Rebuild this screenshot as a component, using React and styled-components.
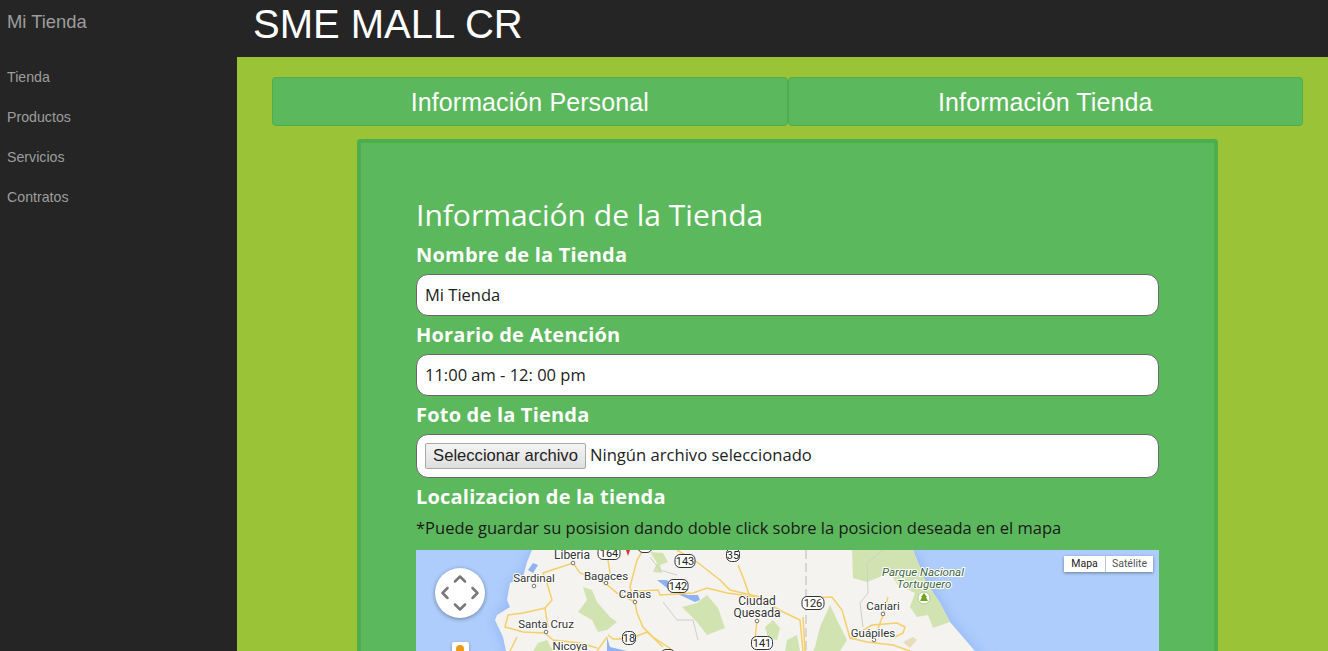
import styled, { createGlobalStyle } from "styled-components";
import { ChevronUp, ChevronDown, ChevronLeft, ChevronRight } from "lucide-react";

const GlobalStyle = createGlobalStyle`
  html, body {
    margin: 0;
    height: 100%;
    overflow: hidden;
    background: #252525;
    font-family: "Liberation Sans", Arial, sans-serif;
  }
  * { box-sizing: border-box; }
`;

const menu = ["Tienda", "Productos", "Servicios", "Contratos"];

const coast =
  "M532 550 L527 562 L523 577 L510 583 L507 600 L510 607 L497 615 L495 620 L503 637 L510 670 L990 670 L975 651 L950 622 L940 603 L925 580 L913 550 Z";

const parks = [
  "M583 587 L592 590 L597 602 L610 617 L617 622 L607 630 L598 632 L592 620 L578 612 L587 600 Z",
  "M650 552 L663 553 L668 562 L660 565 L662 573 L653 572 L657 563 Z",
  "M682 607 L697 603 L707 595 L718 608 L725 628 L707 635 L697 622 Z",
  "M765 627 L773 620 L780 628 L777 640 L768 638 Z",
  "M787 640 L797 635 L800 651 L785 651 Z",
  "M538 643 L547 640 L553 651 L533 651 Z",
  "M852 550 L913 550 L925 580 L940 603 L950 622 L933 628 L928 615 L917 617 L910 607 L915 593 L898 585 L890 573 L867 582 L853 578 Z",
  "M815 647 L820 627 L830 605 L837 620 L847 640 L840 651 L813 651 Z",
];

const roads = [
  "M573 563 L580 573 L605 583 L617 593 L635 602 L637 613 L643 627 L653 637 L668 647 L673 651",
  "M635 602 L630 587 L637 560 L643 550",
  "M677 550 L697 562 L720 580 L730 590 L760 597",
  "M622 592 L658 590 L660 595 L693 593 L707 588 L727 593 L757 597 L783 612 L800 620 L803 651",
  "M738 565 L743 577 L750 597",
  "M573 563 L543 573 L547 583 L552 600 L545 608 L523 613 L508 615 L505 627 L523 632 L545 633 L553 640 L580 643 L597 648",
  "M545 608 L548 627",
  "M510 651 L517 637",
  "M608 560 L610 573 L607 582",
  "M608 635 L613 639 L630 639 L647 632 L663 647",
  "M597 651 L607 637",
  "M757 620 L755 640",
  "M805 598 L832 597 L842 610 L850 638 L867 642 L893 645 L910 651",
  "M803 617 L805 651",
  "M850 638 L872 625 L897 623 L905 627 L903 633 L895 637",
  "M875 637 L883 615 L888 597",
];

const greyRoads = [
  "M883 550 L867 563 L868 593 L860 603 L863 627",
  "M650 557 L660 570 L677 575",
  "M663 602 L677 620 L693 620 L698 640",
];

const lakes = [
  "M657 580 L667 580 L673 590 L687 595 L698 595 L700 600 L695 602 L680 595 L667 588 Z",
  "M607 637 L610 647 L627 651 L607 651 Z",
  "M528 570 L533 563 L538 565 L533 573 Z",
];

const labels = [
  { x: 572, y: 559, text: "Liberia", size: 12 },
  { x: 534, y: 582, text: "Sardinal", size: 11.5 },
  { x: 606, y: 580, text: "Bagaces", size: 11.5 },
  { x: 635, y: 598, text: "Cañas", size: 11.5 },
  { x: 757, y: 605, text: "Ciudad", size: 12 },
  { x: 757, y: 617, text: "Quesada", size: 12 },
  { x: 546, y: 628, text: "Santa Cruz", size: 11.5 },
  { x: 570, y: 650, text: "Nicoya", size: 11.5 },
  { x: 883, y: 610, text: "Cariari", size: 11.5 },
  { x: 873, y: 637, text: "Guápiles", size: 11.5 },
];

const shields = [
  { x: 609, y: 553, w: 22, text: "164" },
  { x: 685, y: 561, w: 20, text: "143" },
  { x: 678, y: 586, w: 20, text: "142" },
  { x: 629, y: 638, w: 13, text: "18" },
  { x: 762, y: 643, w: 21, text: "141" },
  { x: 813, y: 603, w: 22, text: "126" },
  { x: 733, y: 555, w: 13, text: "35" },
  { x: 645, y: 546, w: 14, text: "" },
  { x: 668, y: 656, w: 14, text: "" },
];

const towns = [
  [573, 563], [534, 586], [606, 583], [635, 602], [757, 621], [546, 632], [883, 614], [874, 640],
];

export default function App() {
  return (
    <Page>
      <GlobalStyle />
      <Sidebar>
        <Brand>Mi Tienda</Brand>
        <Menu>
          {menu.map((item) => (
            <MenuItem key={item}>{item}</MenuItem>
          ))}
        </Menu>
      </Sidebar>
      <Column>
        <Header>SME MALL CR</Header>
        <Main>
          <Tabs>
            <Tab>Información Personal</Tab>
            <Tab>Información Tienda</Tab>
          </Tabs>
          <Card>
            <Title>Información de la Tienda</Title>
            <Label>Nombre de la Tienda</Label>
            <TextInput defaultValue="Mi Tienda" />
            <Label>Horario de Atención</Label>
            <TextInput defaultValue="11:00 am - 12: 00 pm" />
            <Label>Foto de la Tienda</Label>
            <FileBox>
              <FileButton type="button">Seleccionar archivo</FileButton>
              <FileName>Ningún archivo seleccionado</FileName>
            </FileBox>
            <Label>Localizacion de la tienda</Label>
            <Hint>*Puede guardar su posision dando doble click sobre la posicion deseada en el mapa</Hint>
            <MapBox>
              <MapDrawing viewBox="416 550 743 120" width="743" height="120">
                <defs>
                  <filter id="shore" x="-10%" y="-10%" width="120%" height="120%">
                    <feGaussianBlur stdDeviation="7" />
                  </filter>
                </defs>
                <rect x="416" y="550" width="743" height="120" fill="#aecdfc" />
                <path d={coast} fill="#8fb3f3" filter="url(#shore)" />
                <path d={coast} fill="#f4f3ef" />
                {parks.map((d) => (
                  <path key={d} d={d} fill="#d2e3b2" />
                ))}
                <path d="M903 642 L913 637 L917 640 L910 648 Z" fill="#e9dcbc" />
                {greyRoads.map((d) => (
                  <path key={d} d={d} fill="none" stroke="#cfcfca" strokeWidth="1" />
                ))}
                <path d="M806 550 L806 651" stroke="#c4c4c0" strokeWidth="1.2" strokeDasharray="9 4" />
                {lakes.map((d) => (
                  <path key={d} d={d} fill="#8fb3f0" />
                ))}
                {roads.map((d) => (
                  <path key={d} d={d} fill="none" stroke="#f6cf6a" strokeWidth="1.5" />
                ))}
                {towns.map(([x, y]) => (
                  <circle key={`${x}-${y}`} cx={x} cy={y} r="1.8" fill="#fff" stroke="#555" strokeWidth="0.8" />
                ))}
                <path d="M626 550 L630 550 L628 556 Z" fill="#d9372c" />
                {labels.map((l) => (
                  <MapLabel key={l.text} x={l.x} y={l.y} $size={l.size}>
                    {l.text}
                  </MapLabel>
                ))}
                <ParkLabel x="923" y="576">Parque Nacional</ParkLabel>
                <ParkLabel x="924" y="588">Tortuguero</ParkLabel>
                <circle cx="924" cy="598" r="6" fill="#fff" stroke="#b7c79c" />
                <path d="M924 593 L927 597 L926 597 L928 601 L920 601 L922 597 L921 597 Z" fill="#6fa51d" />
                {shields.map((s) => (
                  <g key={s.x}>
                    <rect
                      x={s.x - s.w / 2}
                      y={s.y - 6.5}
                      width={s.w}
                      height="13"
                      rx="5"
                      fill="#fff"
                      stroke="#333"
                      strokeWidth="1"
                    />
                    <ShieldText x={s.x} y={s.y + 4}>{s.text}</ShieldText>
                  </g>
                ))}
              </MapDrawing>
              <PanControl>
                <PanUp><ChevronUp size={20} strokeWidth={3} /></PanUp>
                <PanLeft><ChevronLeft size={20} strokeWidth={3} /></PanLeft>
                <PanRight><ChevronRight size={20} strokeWidth={3} /></PanRight>
                <PanDown><ChevronDown size={20} strokeWidth={3} /></PanDown>
              </PanControl>
              <Pegman><PegmanHead /></Pegman>
              <MapType>
                <MapTypeButton $active $width={41}>Mapa</MapTypeButton>
                <MapTypeButton $width={48}>Satélite</MapTypeButton>
              </MapType>
            </MapBox>
          </Card>
        </Main>
      </Column>
    </Page>
  );
}

const Page = styled.div`
  display: flex;
  height: 100vh;
  overflow: hidden;
`;

const Sidebar = styled.aside`
  width: 237px;
  flex-shrink: 0;
  background: #252525;
  padding: 0 7px;
`;

const Brand = styled.div`
  height: 57px;
  padding-top: 11px;
  font-size: 18.4px;
  line-height: 22px;
  color: #9d9d9d;
`;

const Menu = styled.nav`
  display: flex;
  flex-direction: column;
`;

const MenuItem = styled.a`
  height: 40px;
  font-size: 14.2px;
  line-height: 40px;
  color: #9d9d9d;
`;

const Column = styled.div`
  flex: 1;
  min-width: 0;
  display: flex;
  flex-direction: column;
`;

const Header = styled.header`
  height: 57px;
  flex-shrink: 0;
  padding: 1px 0 0 16px;
  background: #252525;
  font-size: 40px;
  line-height: 46px;
  color: #ffffff;
`;

const Main = styled.main`
  flex: 1;
  min-height: 0;
  overflow: hidden;
  padding: 20px 25px 0 35px;
  background: #9ac337;
`;

const Tabs = styled.div`
  display: flex;
`;

const Tab = styled.button`
  flex: 1;
  height: 49px;
  padding: 1px 0 0;
  border: 1px solid #4cae4c;
  border-radius: 4px;
  background: #5cb85c;
  font-family: "Liberation Sans", Arial, sans-serif;
  font-size: 25px;
  letter-spacing: 0.1px;
  color: #ffffff;
`;

const Card = styled.section`
  margin: 13px 85px 0;
  padding: 52px 55px 0;
  border: 4px solid #4cae4c;
  border-bottom: 0;
  border-radius: 4px 4px 0 0;
  background: #5cb85c;
`;

const Title = styled.h2`
  margin: 0 0 1px;
  font-family: "Open Sans", sans-serif;
  font-size: 30px;
  font-weight: 400;
  line-height: 40px;
  color: #ffffff;
`;

const Label = styled.label`
  display: block;
  font-family: "Open Sans", sans-serif;
  font-size: 20px;
  font-weight: 700;
  letter-spacing: 0.2px;
  line-height: 38px;
  color: #ffffff;
`;

const TextInput = styled.input`
  display: block;
  width: 100%;
  height: 42px;
  padding: 0 8px 2px;
  border: 1px solid #666666;
  border-radius: 12px;
  background: #ffffff;
  font-family: "Open Sans", sans-serif;
  font-size: 16.5px;
  color: #222222;
  outline: none;
`;

const FileBox = styled.div`
  display: flex;
  align-items: center;
  gap: 4px;
  height: 44px;
  padding: 0 8px;
  border: 1px solid #666666;
  border-radius: 12px;
  background: #ffffff;
`;

const FileButton = styled.button`
  width: 161px;
  height: 26px;
  padding: 0;
  border: 1px solid #a9a9a9;
  border-radius: 2px;
  background: linear-gradient(#f4f4f4, #dedede);
  font-family: "Liberation Sans", Arial, sans-serif;
  font-size: 16.6px;
  color: #222222;
`;

const FileName = styled.span`
  margin-top: -4px;
  font-family: "Open Sans", sans-serif;
  font-size: 16.6px;
  color: #222222;
`;

const Hint = styled.p`
  margin: 0 0 10px;
  font-family: "Open Sans", sans-serif;
  font-size: 16.5px;
  line-height: 24px;
  color: #1a1a1a;
`;

const MapBox = styled.div`
  position: relative;
  height: 120px;
  overflow: hidden;
`;

const MapDrawing = styled.svg`
  display: block;
`;

const MapLabel = styled.text`
  font-family: Roboto, sans-serif;
  font-size: ${(p) => p.$size}px;
  text-anchor: middle;
  fill: #333333;
  stroke: #ffffff;
  stroke-width: 2px;
  paint-order: stroke;
`;

const ParkLabel = styled.text`
  font-family: Roboto, sans-serif;
  font-size: 11.5px;
  font-style: italic;
  text-anchor: middle;
  fill: #40663f;
  stroke: #ffffff;
  stroke-width: 2px;
  paint-order: stroke;
`;

const ShieldText = styled.text`
  font-family: Roboto, sans-serif;
  font-size: 11px;
  text-anchor: middle;
  fill: #222222;
`;

const PanControl = styled.div`
  position: absolute;
  left: 19px;
  top: 18px;
  width: 50px;
  height: 50px;
  border-radius: 50%;
  background: #ffffff;
  box-shadow: 0 1px 4px rgba(0, 0, 0, 0.4);
  color: #777777;
`;

const PanArrow = styled.span`
  position: absolute;
  display: flex;
`;

const PanUp = styled(PanArrow)`
  left: 15px;
  top: 1px;
`;

const PanDown = styled(PanArrow)`
  left: 15px;
  bottom: 1px;
`;

const PanLeft = styled(PanArrow)`
  left: 0;
  top: 15px;
`;

const PanRight = styled(PanArrow)`
  right: 0;
  top: 15px;
`;

const Pegman = styled.div`
  position: absolute;
  left: 36px;
  top: 92px;
  width: 17px;
  height: 24px;
  padding: 3px 0 0 4px;
  border-radius: 2px;
  background: #ffffff;
  box-shadow: 0 1px 3px rgba(0, 0, 0, 0.35);
`;

const PegmanHead = styled.div`
  width: 8px;
  height: 8px;
  border-radius: 50%;
  background: #eb9c12;
`;

const MapType = styled.div`
  position: absolute;
  top: 6px;
  right: 6px;
  display: flex;
  box-shadow: 0 1px 3px rgba(0, 0, 0, 0.4);
`;

const MapTypeButton = styled.div`
  width: ${(p) => p.$width}px;
  height: 16px;
  background: #ffffff;
  border-left: ${(p) => (p.$active ? "0" : "1px solid #b9c4d6")};
  font-family: Roboto, sans-serif;
  font-size: 10.5px;
  font-weight: 400;
  line-height: 16px;
  text-align: center;
  color: ${(p) => (p.$active ? "#222222" : "#555555")};
`;
